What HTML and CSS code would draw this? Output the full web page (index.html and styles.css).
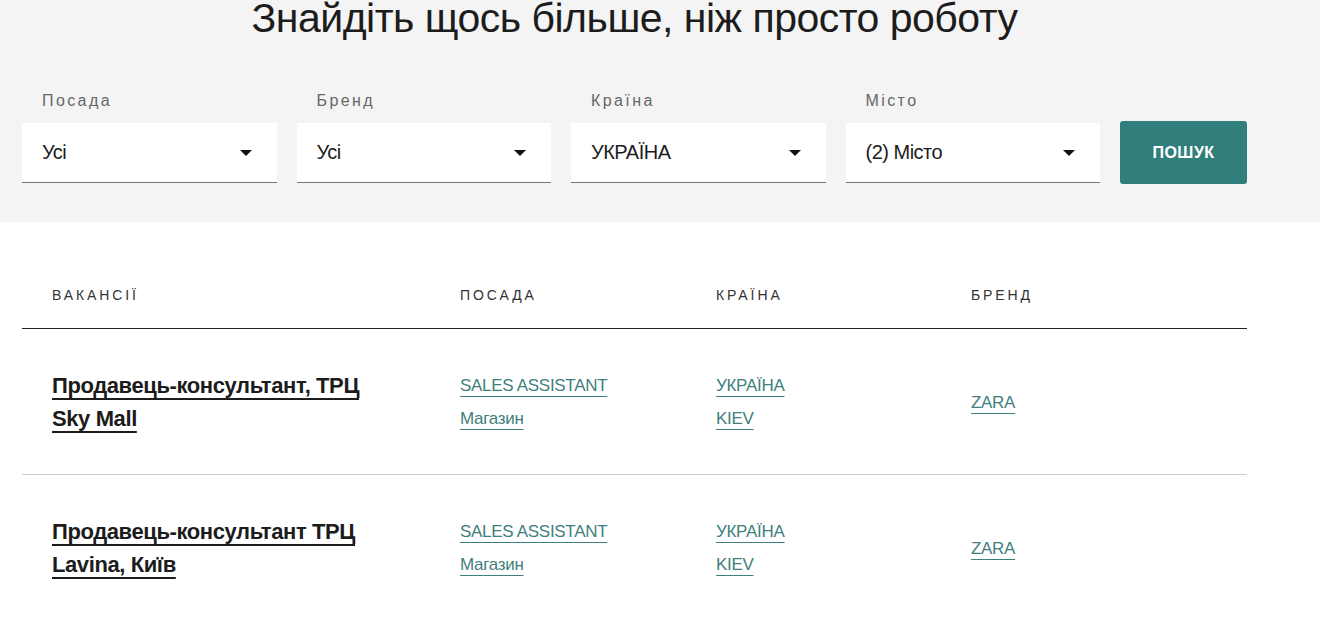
FILE: index.html
```html
<!DOCTYPE html>
<html lang="uk">
<head>
    <meta charset="utf-8">
    <title>Вакансії</title>
    <link rel="stylesheet" href="styles.css">
</head>
<body>
    <section class="search">
        <div class="wrap">
            <h1 class="search-title">Знайдіть щось більше, ніж просто роботу</h1>
            <form class="filters">
                <div class="field">
                    <label class="field-label">Посада</label>
                    <div class="select"><span>Усі</span><i class="caret"></i></div>
                </div>
                <div class="field">
                    <label class="field-label">Бренд</label>
                    <div class="select"><span>Усі</span><i class="caret"></i></div>
                </div>
                <div class="field">
                    <label class="field-label">Країна</label>
                    <div class="select"><span>УКРАЇНА</span><i class="caret"></i></div>
                </div>
                <div class="field">
                    <label class="field-label">Місто</label>
                    <div class="select"><span>(2) Місто</span><i class="caret"></i></div>
                </div>
                <button type="button" class="search-btn">ПОШУК</button>
            </form>
        </div>
    </section>

    <section class="wrap results">
        <div class="row head">
            <div class="cell">ВАКАНСІЇ</div>
            <div class="cell">ПОСАДА</div>
            <div class="cell">КРАЇНА</div>
            <div class="cell">БРЕНД</div>
        </div>

        <div class="row job">
            <div class="cell"><a class="job-title" href="#">Продавець-консультант, ТРЦ Sky Mall</a></div>
            <div class="cell links"><a href="#">SALES ASSISTANT</a><a href="#">Магазин</a></div>
            <div class="cell links"><a href="#">УКРАЇНА</a><a href="#">KIEV</a></div>
            <div class="cell links"><a href="#">ZARA</a></div>
        </div>

        <div class="row job">
            <div class="cell"><a class="job-title" href="#">Продавець-консультант ТРЦ Lavina, Київ</a></div>
            <div class="cell links"><a href="#">SALES ASSISTANT</a><a href="#">Магазин</a></div>
            <div class="cell links"><a href="#">УКРАЇНА</a><a href="#">KIEV</a></div>
            <div class="cell links"><a href="#">ZARA</a></div>
        </div>
    </section>
</body>
</html>
```

FILE: styles.css
```css
body { margin: 0; background: #fff; color: #222; font-family: "Liberation Sans", Arial, sans-serif; }
.wrap { width: 1225px; margin-left: 22px; }

.search { background: #f4f4f4; padding-bottom: 39px; }
.search-title { margin: -8px 0 0; text-align: center; font-size: 41px; font-weight: normal; letter-spacing: -0.5px; line-height: 52px; color: #1c1c1c; }
.filters { display: flex; align-items: flex-end; gap: 20px; margin-top: 47px; }
.field { flex: 1; }
.field-label { display: block; padding-left: 20px; margin-bottom: 12px; font-size: 16px; letter-spacing: 2.4px; color: #666; line-height: 20px; }
.select { display: flex; align-items: center; justify-content: space-between; height: 59px; padding: 0 25px 0 20px; background: #fff; border-bottom: 1px solid #777; font-size: 20px; letter-spacing: -0.5px; color: #1c1c1c; }
.caret { width: 0; height: 0; border-left: 6px solid transparent; border-right: 6px solid transparent; border-top: 6px solid #111; }
.search-btn { width: 127px; height: 63px; margin-bottom: -1px; background: #317f7c; color: #fff; border: none; border-radius: 3px; font-family: inherit; font-size: 16px; font-weight: bold; letter-spacing: 0.5px; cursor: pointer; }

.row { display: grid; grid-template-columns: 408px 256px 255px 1fr; }
.cell { padding-left: 30px; }
.head { padding: 63px 0 23px; border-bottom: 1px solid #222; font-size: 14px; letter-spacing: 2.9px; color: #333; line-height: 20px; }
.job { align-items: center; padding: 40px 0 39px; border-bottom: 1px solid #ccc; }
.job:last-child { border-bottom: none; }
.job-title { display: block; padding-right: 50px; font-size: 22px; font-weight: bold; letter-spacing: -0.4px; line-height: 33px; color: #1c1c1c; text-decoration: underline; text-decoration-thickness: 1.5px; text-underline-offset: 5px; }
.links a { display: block; width: max-content; font-size: 17px; letter-spacing: -0.3px; line-height: 33px; color: #3f7f7d; text-decoration: underline; text-decoration-thickness: 1px; text-underline-offset: 5px; }
```
